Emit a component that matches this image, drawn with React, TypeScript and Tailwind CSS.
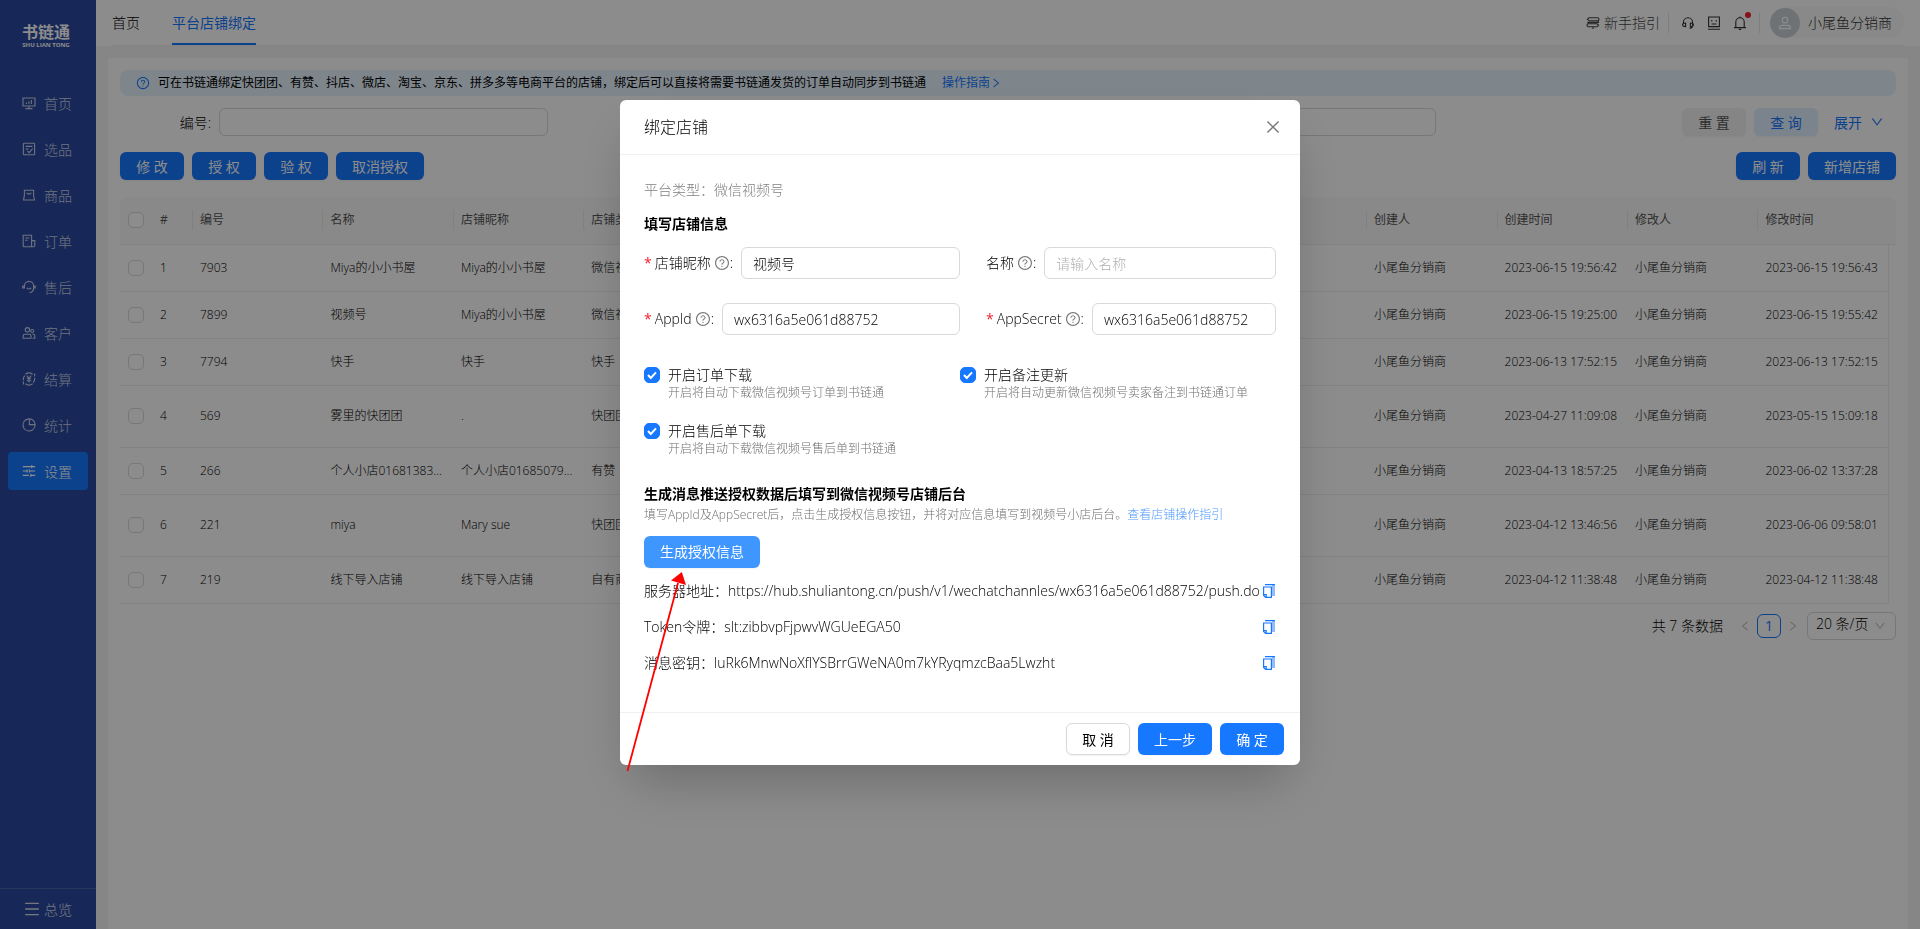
import type { ReactNode } from 'react';
import {
  AiOutlineClose,
  AiOutlineDown,
  AiOutlineLeft,
  AiOutlineQuestionCircle,
  AiOutlineRight,
} from 'react-icons/ai';

function Icon({ children, className = 'size-3.5' }: { children: ReactNode; className?: string }) {
  return (
    <svg
      viewBox="0 0 14 14"
      fill="none"
      stroke="currentColor"
      strokeWidth="1.1"
      className={`shrink-0 ${className}`}
      aria-hidden="true"
    >
      {children}
    </svg>
  );
}

const menu = [
  {
    name: '首页',
    icon: <path d="M1 2h12v8H1zM7 10v2.5M3.5 12.6h7M4.4 8V6.4M6.9 8V5.2M9.4 8V4" />,
  },
  {
    name: '选品',
    icon: (
      <path d="M2.2 1.2h9.6q.8 0 .8.8v10q0 .8-.8.8H2.2q-.8 0-.8-.8V2q0-.8.8-.8zM3.6 4.4h6.8M3.6 7h3M5.4 8.8l1.8 1.8 3.4-4" />
    ),
  },
  {
    name: '商品',
    icon: <path d="M2.4 2.2h9.2v5.6l.9 4.2h-11l.9-4.2zM4.6 4.8q2.4 2.6 4.8 0M2.3 7.6L1.5 12" />,
  },
  {
    name: '订单',
    icon: <path d="M1.2 1.2h8.4v11.6H2.4q-1.2 0-1.2-1.2zM9.6 6.6h3.2v5q0 1.2-1.2 1.2h-2M3.2 4h4.2M3.2 6.2h2.4" />,
  },
  {
    name: '售后',
    icon: (
      <>
        <path d="M2.4 8.6V6a4.6 4.6 0 019.2 0v2.6q-.4 3.4-4 4.2" />
        <path d="M1 5.6v3M13 5.6v3" strokeWidth="1.6" />
        <path d="M4.8 7.8q2.2 2.4 4.4 0" />
      </>
    ),
  },
  {
    name: '客户',
    icon: (
      <>
        <circle cx="5.4" cy="3.8" r="2.2" />
        <circle cx="10.2" cy="5" r="1.5" />
        <path d="M1.2 12.2v-2.4q0-1.6 1.6-1.6h4.6q1.6 0 1.6 1.6v2.4zM10.4 8.2h.8q1.6 0 1.6 1.6v2.4h-2.2" />
      </>
    ),
  },
  {
    name: '结算',
    icon: (
      <>
        <path d="M3.4 2.2A6 6 0 0110.6 2.2M12.6 1.4v3.2M10.6 11.8A6 6 0 013.4 11.8M1.4 12.6V9.4M1.4 8.4q-.4-3 1.4-4.8M12.6 5.8q.4 2.8-1.4 4.8" />
        <path d="M4.8 3.6L7 6.4l2.2-2.8M7 6.4v4M4.8 6.8h4.4M4.8 8.8h4.4" />
      </>
    ),
  },
  {
    name: '统计',
    icon: <path d="M5.8 1.1a6 6 0 107.1 7.1M7.4.9v5.7h5.7A5.8 5.8 0 007.4.9zM13 6.6q.1 1.2-.3 2.2M7.4.9q-1 0-1.8.3" />,
  },
  {
    name: '设置',
    icon: <path d="M.8 2.6h12.4M.8 7h4M7 7h6.2M.8 11.4h6M9 11.4h4.2M9.8 1v3.2M5.2 5.4v3.2M7.4 5.4v3.2M8.8 9.8V13" />,
    active: true,
  },
];

const shops = [
  { id: '7903', name: 'Miya的小小书屋', nick: 'Miya的小小书屋', type: '微信视频号', created: '2023-06-15 19:56:42', updated: '2023-06-15 19:56:43' },
  { id: '7899', name: '视频号', nick: 'Miya的小小书屋', type: '微信视频号', created: '2023-06-15 19:25:00', updated: '2023-06-15 19:55:42' },
  { id: '7794', name: '快手', nick: '快手', type: '快手', created: '2023-06-13 17:52:15', updated: '2023-06-13 17:52:15' },
  { id: '569', name: '雾里的快团团', nick: '.', type: '快团团', created: '2023-04-27 11:09:08', updated: '2023-05-15 15:09:18', tall: true },
  { id: '266', name: '个人小店01681383...', nick: '个人小店01685079...', type: '有赞', created: '2023-04-13 18:57:25', updated: '2023-06-02 13:37:28' },
  { id: '221', name: 'miya', nick: 'Mary sue', type: '快团团', created: '2023-04-12 13:46:56', updated: '2023-06-06 09:58:01', tall: true },
  { id: '219', name: '线下导入店铺', nick: '线下导入店铺', type: '自有商城', created: '2023-04-12 11:38:48', updated: '2023-04-12 11:38:48' },
];

const columns = ['编号', '名称', '店铺昵称', '店铺类型', '', '', '', '', '', '创建人', '创建时间', '修改人', '修改时间'];

const options = [
  { id: 'order', title: '开启订单下载', desc: '开启将自动下载微信视频号订单到书链通' },
  { id: 'remark', title: '开启备注更新', desc: '开启将自动更新微信视频号卖家备注到书链通订单' },
  { id: 'refund', title: '开启售后单下载', desc: '开启将自动下载微信视频号售后单到书链通' },
];

const secrets = [
  { label: '服务器地址', value: 'https://hub.shuliantong.cn/push/v1/wechatchannles/wx6316a5e061d88752/push.do' },
  { label: 'Token令牌', value: 'slt:zibbvpFjpwvWGUeEGA50' },
  { label: '消息密钥', value: 'luRk6MnwNoXflYSBrrGWeNA0m7kYRyqmzcBaa5Lwzht' },
];

function Button({ children, className = 'h-7 border-transparent bg-[#1677ff] text-white' }: { children: ReactNode; className?: string }) {
  return (
    <button type="button" className={`min-w-16 rounded-md border bg-clip-border px-[15px] font-normal whitespace-nowrap shadow-xs ${className}`}>
      {children}
    </button>
  );
}

function Checkbox({ id, label, checked = false }: { id: string; label?: string; checked?: boolean }) {
  return (
    <span className="grid size-4 shrink-0">
      <input
        id={id}
        type="checkbox"
        aria-label={label}
        defaultChecked={checked}
        className="peer col-start-1 row-start-1 size-4 appearance-none rounded-[5px] border border-[#d9d9d9] bg-white checked:border-[#1677ff] checked:bg-[#1677ff]"
      />
      <svg
        viewBox="0 0 16 16"
        className="pointer-events-none invisible col-start-1 row-start-1 size-4 peer-checked:visible"
        fill="none"
        stroke="white"
        strokeWidth="2"
      >
        <path d="M4 8l2.8 3L12 5.4" />
      </svg>
    </span>
  );
}

function Field({ id, label, value, placeholder, required = false }: { id: string; label: string; value?: string; placeholder?: string; required?: boolean }) {
  return (
    <div className="flex items-center gap-2">
      <label htmlFor={id} className="flex shrink-0 items-center gap-[3px]">
        {required && <span className="font-normal text-[#f5222d]">*</span>}
        {label}
        <span className="flex items-center">
          <AiOutlineQuestionCircle className="size-4 text-[#7a7a7a]" />:
        </span>
      </label>
      <input
        id={id}
        defaultValue={value}
        placeholder={placeholder}
        className="h-8 w-full min-w-0 rounded-md border border-[#d9d9d9] px-[11px] outline-none placeholder:text-[#b0b0b0]"
      />
    </div>
  );
}

function CopyIcon() {
  return (
    <svg viewBox="0 0 14 14" className="size-3.5" aria-hidden="true">
      <path d="M10 1h3v11h-3z" fill="#91bdff" />
      <path d="M3 .7h10M1.6 3v8.4l2 1.9H9.4V3z" fill="none" stroke="#1677ff" strokeWidth="1.2" />
      <path d="M1.6 10.6h2.6v2.6" fill="none" stroke="#1677ff" strokeWidth="1.2" />
    </svg>
  );
}

function Sidebar() {
  return (
    <aside className="flex w-24 shrink-0 flex-col bg-[#2a49a0]">
      <div className="flex h-[84px] flex-col items-center pt-[22px] pr-1 text-white">
        <span className="text-[16px] leading-5 font-bold">书链通</span>
        <span className="text-[6px] leading-[6px] font-bold">SHU LIAN TONG</span>
      </div>
      <nav className="flex flex-1 flex-col gap-2 px-2">
        {menu.map((item) => (
          <a
            key={item.name}
            href="#"
            className={`flex h-[38px] items-center gap-2 rounded px-3.5 ${item.active ? 'bg-[#1677ff] text-white' : 'text-white/75'}`}
          >
            <Icon>{item.icon}</Icon>
            {item.name}
          </a>
        ))}
      </nav>
      <button type="button" className="flex h-[41px] items-center gap-1 border-t border-white/15 pl-6 text-white/80">
        <Icon className="size-4">
          <path d="M1 2h12M1 7h12M1 12h12" />
        </Icon>
        总览
      </button>
    </aside>
  );
}

function TopBar() {
  return (
    <header className="bg-white px-4">
      <div className="flex h-[46px] items-center justify-between border-b border-[#eeeeee]">
        <nav className="flex h-full gap-8">
          <a href="#" className="flex items-center">首页</a>
          <a href="#" className="flex items-center border-b-2 border-[#1677ff] pt-0.5 font-normal text-[#1677ff]">平台店铺绑定</a>
        </nav>
        <div className="flex items-center text-[#333]">
          <a href="#" className="flex items-center gap-1 text-[#444]">
            <Icon>
              <path d="M3 1.8h8.6q1.4 0 1.4 1.5t-1.4 1.5H3L1.4 3.3zM11 7.8H2.4Q1 7.8 1 9.3t1.4 1.5H11l1.6-1.5zM12.4 4.8v1.6H2v1.4M7 10.8V13" />
            </Icon>
            新手指引
          </a>
          <span className="mx-2 h-5 w-px bg-[#e5e5e5]" />
          <div className="flex gap-3 px-1">
            <button type="button" aria-label="客服">
              <Icon>
                <path d="M2.4 8V6.4a4.6 4.6 0 019.2 0V10q0 2-3 2.4M4.6 7v3.6q-3 0-3-1.8T4.6 7zM9.4 7v3.6q3 0 3-1.8T9.4 7z" />
              </Icon>
            </button>
            <button type="button" aria-label="反馈">
              <Icon>
                <path d="M1.6 1h10.8v9.6H1.6zM1 13.2h12M4.8 4v1.6M9.2 4v1.6M4.6 8h4.8" />
              </Icon>
            </button>
            <button type="button" aria-label="消息" className="relative">
              <Icon>
                <path d="M2.8 11.4V6a4.2 4.2 0 018.4 0v5.4M1 11.6h12M7 .6v1.2M5.8 13.4h2.4" />
              </Icon>
              <span className="absolute -top-1 -right-1 size-1.5 rounded-full bg-[#f5222d]" />
            </button>
          </div>
          <span className="mr-2.5 ml-2 h-5 w-px bg-[#e5e5e5]" />
          <button type="button" className="flex h-[31px] items-center gap-2 rounded-full bg-[#f9f9f9] pr-3">
            <span className="grid size-[30px] place-items-center rounded-full bg-[#c9d0d6] text-white">
              <Icon>
                <circle cx="7" cy="4.2" r="2.8" />
                <path d="M1.4 12.6q0-3.2 3-3.2h5.2q3 0 3 3.2z" />
              </Icon>
            </span>
            小尾鱼分销商
          </button>
        </div>
      </div>
    </header>
  );
}

function Filters() {
  return (
    <form className="flex items-center">
      <div className="grid flex-1 grid-cols-3 gap-4">
        {['编号', '名称', '店铺昵称'].map((label) => (
          <label key={label} className="flex items-center gap-2">
            <span className="w-[91px] text-right">{label}:</span>
            <input className="h-7 w-full min-w-0 flex-1 rounded-md border border-[#d9d9d9] px-3" />
          </label>
        ))}
      </div>
      <div className="flex w-[460px] items-center justify-end gap-2 pr-3">
        <Button className="h-7 border-transparent bg-[#f2f2f3] text-[#555]">重 置</Button>
        <Button className="h-7 border-transparent bg-[#e1f0ff] text-[#1677ff]">查 询</Button>
        <button type="button" className="flex items-center gap-2 pl-2 font-normal text-[#1677ff]">
          展开
          <AiOutlineDown className="size-3.5" />
        </button>
      </div>
    </form>
  );
}

function ShopTable() {
  return (
    <table className="w-full table-fixed text-left text-[12px]">
      <colgroup>
        <col className="w-8" />
        <col className="w-10" />
        {columns.map((_, i) => (
          <col key={i} />
        ))}
        <col className="w-2" />
      </colgroup>
      <thead>
        <tr className="h-[47px] bg-[#fafafa] text-[#555]">
          <th className="rounded-tl-lg border-b border-[#eeeeee] pl-2">
            <Checkbox id="all" label="全选" />
          </th>
          <th className="border-b border-[#eeeeee] pl-2 font-normal">#</th>
          {columns.map((name, i) => (
            <th key={i} className="border-b border-[#eeeeee] font-normal">
              <div className="flex h-5 items-center border-l border-[#ececec] pl-[7px]">{name}</div>
            </th>
          ))}
          <th className="rounded-tr-lg border-b border-[#eeeeee]" />
        </tr>
      </thead>
      <tbody>
        {shops.map((shop, i) => (
          <tr
            key={shop.id}
            className={`[&>td]:border-b [&>td]:border-[#eeeeee] [&>td]:pl-2 [&>td]:whitespace-nowrap ${shop.tall ? 'h-[62px]' : 'h-[47px]'}`}
          >
            <td>
              <Checkbox id={`shop-${shop.id}`} label={shop.name} />
            </td>
            <td>{i + 1}</td>
            <td>{shop.id}</td>
            <td>{shop.name}</td>
            <td>{shop.nick}</td>
            <td>{shop.type}</td>
            <td colSpan={5} />
            <td>小尾鱼分销商</td>
            <td>{shop.created}</td>
            <td>小尾鱼分销商</td>
            <td>{shop.updated}</td>
            <td className="border-b-0! border-l border-l-[#d4d4d4] p-0!" />
          </tr>
        ))}
      </tbody>
    </table>
  );
}

function Pagination() {
  return (
    <div className="mt-2 flex items-center justify-end">
      <span className="mr-4">共 7 条数据</span>
      <button type="button" aria-label="上一页" className="text-[#bbb]">
        <AiOutlineLeft className="size-3" />
      </button>
      <button type="button" className="mx-1.5 size-6 rounded-md border border-[#1677ff] font-normal text-[#1677ff]">1</button>
      <button type="button" aria-label="下一页" className="text-[#bbb]">
        <AiOutlineRight className="size-3" />
      </button>
      <div className="relative ml-2">
        <select aria-label="每页条数" className="h-7 w-[89px] appearance-none rounded-md border border-[#d9d9d9] pb-1 pl-2 outline-none">
          <option>20 条/页</option>
        </select>
        <AiOutlineDown className="pointer-events-none absolute top-2 right-2.5 size-3 text-[#bbb]" />
      </div>
    </div>
  );
}

function BindModal() {
  return (
    <div className="fixed inset-0 flex items-start justify-center bg-black/45 pt-[100px]">
      <section role="dialog" aria-label="绑定店铺" className="relative w-[680px] rounded-md bg-white shadow-2xl">
        <div className="flex h-[55px] items-center justify-between border-b border-[#f0f0f0] pr-[18px] pl-6">
          <h2 className="text-[16px]">绑定店铺</h2>
          <button type="button" aria-label="关闭" className="text-[#7a7a7a]">
            <AiOutlineClose className="size-[18px]" />
          </button>
        </div>

        <div className="px-6 pt-6 pb-[38px] leading-[22px]">
          <p className="text-[#808080]">平台类型：微信视频号</p>
          <h3 className="mt-3 font-bold">填写店铺信息</h3>

          <div className="mt-3 grid grid-cols-2 gap-y-6">
            <Field id="nick" label="店铺昵称" value="视频号" required />
            <div className="pl-[26px]">
              <Field id="name" label="名称" placeholder="请输入名称" />
            </div>
            <Field id="appid" label="AppId" value="wx6316a5e061d88752" required />
            <div className="pl-[26px]">
              <Field id="secret" label="AppSecret" value="wx6316a5e061d88752" required />
            </div>
          </div>

          <div className="mt-[29px] grid grid-cols-2 gap-y-5">
            {options.map((option) => (
              <div key={option.id} className="flex items-start gap-2">
                <div className="pt-[3px]">
                  <Checkbox id={option.id} checked />
                </div>
                <label htmlFor={option.id}>
                  <span className="block leading-[22px]">{option.title}</span>
                  <span className="block text-[12px] leading-[14px] text-[#707070]">{option.desc}</span>
                </label>
              </div>
            ))}
          </div>

          <h3 className="mt-[27px] font-bold">生成消息推送授权数据后填写到微信视频号店铺后台</h3>
          <p className="text-[12px] leading-5 text-[#707070]">
            填写AppId及AppSecret后，点击生成授权信息按钮，并将对应信息填写到视频号小店后台。
            <a href="#" className="text-[#4f99ff]">查看店铺操作指引</a>
          </p>
          <Button className="mt-[11px] mb-3 h-8 border-transparent bg-[#4096ff] text-white">生成授权信息</Button>

          <dl className="space-y-3.5">
            {secrets.map((item) => (
              <div key={item.label} className="flex items-center">
                <dt className="shrink-0">{item.label}：</dt>
                <dd className="min-w-0 flex-1">{item.value}</dd>
                <button type="button" aria-label={`复制${item.label}`}>
                  <CopyIcon />
                </button>
              </div>
            ))}
          </dl>
        </div>

        <div className="flex justify-end gap-2 border-t border-[#f0f0f0] px-4 py-2.5">
          <Button className="h-8 border-[#d9d9d9] bg-white">取 消</Button>
          <Button className="h-8 border-transparent bg-[#1677ff] text-white">上一步</Button>
          <Button className="h-8 border-transparent bg-[#1677ff] text-white">确 定</Button>
        </div>

        {/* Arrow pointing at the generate button */}
        <svg viewBox="0 0 64 202" className="pointer-events-none absolute -bottom-2 left-1 h-[202px] w-16" aria-hidden="true">
          <path d="M3.5 200L54 12" stroke="#ff0000" strokeWidth="1.8" />
          <path d="M57.8 1L47 9.5 62 14z" fill="#ff0000" />
        </svg>
      </section>
    </div>
  );
}

export default function App() {
  return (
    <div className="flex min-h-screen bg-[#f5f5f5] font-['Open_Sans','Noto_Sans_CJK_SC',sans-serif] text-[14px] font-light text-black">
      <Sidebar />
      <div className="flex min-w-0 flex-1 flex-col">
        <TopBar />
        <main className="mx-3 mt-3 flex-1 bg-white p-3">
          <div className="flex h-[26px] items-center rounded-lg bg-[#e6f4ff] px-4 text-[12px] font-normal">
            <AiOutlineQuestionCircle className="mr-2 size-3.5 text-[#1677ff]" />
            可在书链通绑定快团团、有赞、抖店、微店、淘宝、京东、拼多多等电商平台的店铺，绑定后可以直接将需要书链通发货的订单自动同步到书链通
            <a href="#" className="ml-4 flex items-center text-[#1677ff]">
              操作指南
              <AiOutlineRight className="size-3" />
            </a>
          </div>
          <div className="mt-3">
            <Filters />
          </div>
          <div className="mt-4 mb-[17px] flex gap-2">
            <Button>修 改</Button>
            <Button>授 权</Button>
            <Button>验 权</Button>
            <Button>取消授权</Button>
            <div className="ml-auto flex gap-2">
              <Button>刷 新</Button>
              <Button>新增店铺</Button>
            </div>
          </div>
          <ShopTable />
          <Pagination />
        </main>
      </div>
      <BindModal />
    </div>
  );
}
